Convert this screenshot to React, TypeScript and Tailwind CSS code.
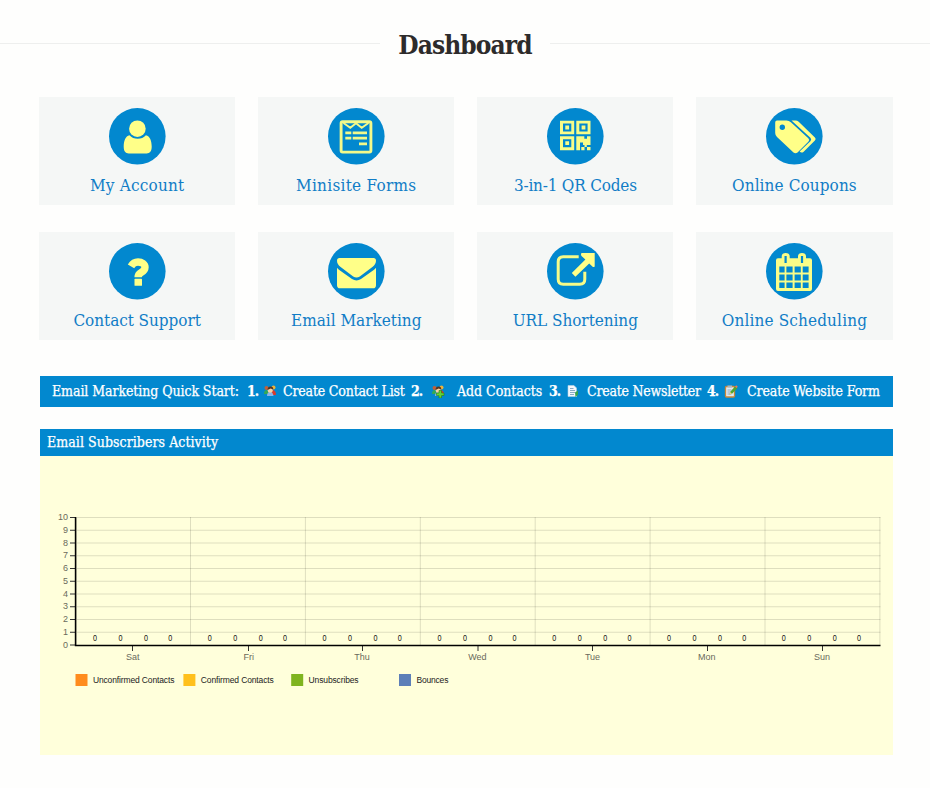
import React from "react";

const slab = "font-['Roboto_Slab','DejaVu_Serif_Condensed','DejaVu_Serif',serif] [font-stretch:condensed]";

const UserIcon = () => (
  <g fill="#ffff88">
    <circle cx="28.4" cy="20.7" r="8.3" />
    <path d="M20.5 27.2c-4 .8-5.800 5.500-5.800 11.300 0 5 2 6.900 5 6.900h18c3 0 5-1.900 5-6.900 0-5.800-1.800-10.500-5.800-11.300-2 2.300-5 3.600-8.200 3.600s-6.200-1.300-8.200-3.600z" />
  </g>
);

const FormIcon = () => (
  <g fill="none" stroke="#f3f98a">
    <rect x="13.1" y="13.7" width="29.8" height="30.4" rx="1.5" strokeWidth="2.9" />
    <path d="M15.500 15l6.800 4.800 5.700-4.500 5.700 4.500 6.800-4.800" strokeWidth="1.9" />
    <path d="M17.300 24.800h6M24.700 24.800h14.300M17.300 30.200h6M24.700 30.200h14.300M31 35.800h8" strokeWidth="2.8" />
  </g>
);

const QrIcon = () => (
  <g fill="#f8fc88">
    <path
      fillRule="evenodd"
      d="M13 12.700h14.200v13.600h-14.200zM16 15.600v7.900h8.300v-7.900zM29.300 12.700h14.200v13.600h-14.200zM32.300 15.600v7.900h8.300v-7.900zM13 28.300h14.200v14h-14.200zM16 31.300v8h8.300v-8z"
    />
    <path d="M18.300 17.600h3.800v3.800h-3.800zM34.600 17.600h3.800v3.800h-3.800zM18.300 33.300h3.800v3.800h-3.800z" />
    <path d="M29.300 28.300h8v2.500h2.700v-2.500h3.500v8.700h-7.500v-2.500h-3v7.800h-3.700zM34.300 39h3.200v3.300h-3.200zM37.500 37h2.300v2h-2.300zM40 39h3.500v3.300h-3.500z" />
  </g>
);

const TagsIcon = () => (
  <g fill="#ffff88">
    <path
      fillRule="evenodd"
      d="M11 12.500h9.500q2.500 0 4.400 1.700l17.400 16q1.800 1.700.2 3.400l-11 10.800q-2 1.500-4 0l-16.500-15.400q-1.800-1.700-1.800-4v-10.500q0-2 1.800-2zM16.300 16.600a2.700 2.700 0 1 0 0 5.400a2.700 2.700 0 1 0 0-5.400z"
    />
    <path d="M25.500 12.500h4q1.800 0 3.200 1.300l16.200 15.600q1.600 1.600 0 3.200l-11.500 11.300q-1.800 1.300-3.800-.3l10.800-10.400q1.600-1.600 0-3.400z" />
  </g>
);

const QuestionIcon = () => (
  <g>
    <path d="M22 23.300c1.600-2.700 4-4.300 7-4.300 4 0 7 2 7 5.200 0 2.800-1.900 4.200-4 5.500-2 1.200-2.900 2.300-2.900 4.600" fill="none" stroke="#ffff88" strokeWidth="7.4" />
    <rect x="25.5" y="35.8" width="7.5" height="7" rx=".6" fill="#ffff88" />
  </g>
);

const MailIcon = () => (
  <g fill="#ffff88">
    <path d="M11.500 15h34q2.500 0 2.500 2.800c0 2.500-1.300 4.400-3.300 5.900l-12.900 9.700q-3.300 2.200-6.600 0l-12.900-9.700c-2-1.500-3.300-3.400-3.300-5.900q0-2.800 2.500-2.800z" />
    <path d="M9 24.700q1 1.200 2.300 2.200l12.700 9.200q4.500 2.700 9 0l12.700-9.200q1.300-1 2.300-2.200v17.500q0 3.100-3 3.100h-33q-3 0-3-3.100z" />
  </g>
);

const LinkIcon = () => (
  <g>
    <path d="M31.700 13.800h-15.500q-5 0-5 5v17.400q0 5 5 5h16.600q5 0 5-5v-7.500" fill="none" stroke="#f7fb88" strokeWidth="3" />
    <path d="M34.500 10.100h13.200v13.500q-1.300 1-2.300 0l-3.200-3.200-13.800 13.300-3.600-3.600 13.600-13.500-3.900-3.600q-1-1.500 0-2.900z" fill="#ffff88" />
  </g>
);

const CalendarIcon = () => (
  <g>
    <path d="M12 15.300h3.700v-1.800q0-3.500 4-3.500t4 3.500v1.800h8.300v-1.800q0-3.500 4-3.500t4 3.500v1.800h4q2 0 2 2v28.700q0 2-2 2h-32q-2 0-2-2v-28.700q0-2 2-2z" fill="#f9fd88" />
    <path d="M18.500 13h2.200v7h-2.200zM34.900 13h2.200v7h-2.200zM13.300 23.600h5.300v6h-5.300zM20.400 23.600h6.200v6h-6.200zM28.600 23.600h6.200v6h-6.200zM36.700 23.600h5.900v6h-5.900zM13.300 31.400h5.300v6.200h-5.300zM20.400 31.400h6.200v6.200h-6.200zM28.600 31.400h6.200v6.200h-6.200zM36.700 31.400h5.900v6.200h-5.900zM13.300 39.400h5.300v5.600h-5.300zM20.400 39.400h6.200v5.600h-6.200zM28.600 39.400h6.200v5.600h-6.200zM36.700 39.400h5.900v5.600h-5.900z" fill="#0288cf" />
  </g>
);

const tiles = [
  { label: "My Account", Icon: UserIcon, track: "tracking-[0.2px]" },
  { label: "Minisite Forms", Icon: FormIcon, track: "tracking-[0.27px]" },
  { label: "3-in-1 QR Codes", Icon: QrIcon, track: "tracking-[-0.2px]" },
  { label: "Online Coupons", Icon: TagsIcon, track: "tracking-[0.1px]" },
  { label: "Contact Support", Icon: QuestionIcon, track: "tracking-[-0.05px]" },
  { label: "Email Marketing", Icon: MailIcon, track: "tracking-[0px]" },
  { label: "URL Shortening", Icon: LinkIcon, track: "tracking-[-0.05px]" },
  { label: "Online Scheduling", Icon: CalendarIcon, track: "tracking-[0.14px]" },
];

const People = ({ add = false }: { add?: boolean }) => (
  <svg width="14" height="14" viewBox="0 0 14 14">
    <circle cx="3.500" cy="4" r="2" fill="#c0603a" />
    <circle cx="10.500" cy="3.500" r="2" fill="#e9b23c" />
    <path d="M1 10q0-4 3-4l2 4z" fill="#35a852" />
    <path d="M9 6q4 0 4 5h-4z" fill="#d93a2b" />
    <path d="M4 12q0-4 3-4t3.500 4z" fill="#8bb5e8" />
    <circle cx="7.200" cy="6.300" r="2.500" fill="#f7d3a3" />
    <path d="M4.500 6q0-3.500 3-3.500t2.700 3l-2.500-1z" fill="#57331d" />
    {add && <path d="M8 6.500h2.500v2.500h2.500v2.500h-2.500v2.500h-2.500v-2.500h-2.500v-2.500h2.500z" fill="#62d236" stroke="#287b16" strokeWidth=".6" />}
  </svg>
);

const Newsletter = () => (
  <svg width="12" height="14" viewBox="0 0 12 14">
    <path d="M1 1.500h6l2.500 2.500v8.500h-8.500z" fill="#f3f8fc" stroke="#b8d0e2" strokeWidth=".6" />
    <path d="M3 4.500h3.500M3 6.500h5M3 8.500h5M3 10.500h4" stroke="#6e95b5" strokeWidth=".8" />
    <path d="M8 8.500l3-2v4l-2.500 2.500z" fill="#37a34a" />
  </svg>
);

const FormPencil = () => (
  <svg width="14" height="14" viewBox="0 0 14 14">
    <rect x="1.5" y="2.5" width="9" height="10.5" rx="1" fill="#dfe9f1" stroke="#ca8738" strokeWidth="1.3" />
    <path d="M3.500 1.500h4.500v2h-4.500z" fill="#a8b7c2" />
    <path d="M3.500 6h4M3.500 8h3M3.500 10h4" stroke="#7e9bb5" strokeWidth=".8" />
    <path d="M5.500 10.500l1-3 5-5.500 2 2-5.200 5.600z" fill="#50a52f" />
    <path d="M11 2.500l1.200-1.300 1.600 1.600-1.300 1.300z" fill="#ed765b" />
    <path d="M5.500 10.500l.8-2.500 1.700 1.700z" fill="#f2cf75" />
  </svg>
);

const days = [
  { name: "Sat", x: 132.7, tick: 132.5 },
  { name: "Fri", x: 248.7, tick: 248.5 },
  { name: "Thu", x: 362, tick: 362.5 },
  { name: "Wed", x: 477.3, tick: 478 },
  { name: "Tue", x: 592.5, tick: 592.5 },
  { name: "Mon", x: 706.7, tick: 707.5 },
  { name: "Sun", x: 822, tick: 822.5 },
];

const legend = [
  { name: "Unconfirmed Contacts", x: 75.5, w: 81.5, color: "#ff8c1e" },
  { name: "Confirmed Contacts", x: 183.4, w: 73, color: "#ffc01c" },
  { name: "Unsubscribes", x: 291.2, w: 50, color: "#7fb41f" },
  { name: "Bounces", x: 399, w: 32, color: "#5d7fb8" },
];

const Chart = () => (
  <svg className="block font-['Liberation_Sans',sans-serif]" width="853" height="299" viewBox="40 456 853 299">
    {Array.from({ length: 11 }, (_, i) => {
      const y = 645 - i * 12.75;
      return (
        <g key={i}>
          {i > 0 && <path d={`M77 ${y}H880.500`} stroke="#000" strokeOpacity=".13" />}
          <path d={`M70 ${y}H76`} stroke="#333" />
          <text x="68" y={y + 2.6} textAnchor="end" fontSize="9" fill="#6a6a5c">{i}</text>
        </g>
      );
    })}
    {days.map((d, i) => {
      const right = 190.5 + i * 114.9;
      return (
        <g key={d.name}>
          <path d={`M${right} 517V645`} stroke="#000" strokeOpacity=".13" />
          <path d={`M${d.tick} 645v6`} stroke="#333" />
          <text x={d.x} y="660" textAnchor="middle" fontSize="9" fill="#6a6a5c">{d.name}</text>
          {[95, 120.5, 146, 170.2].map((x) => (
            <text key={x} x={x + i * 114.8} y="641.3" textAnchor="middle" fontSize="8.5" textLength="4" lengthAdjust="spacingAndGlyphs" fill="#111">0</text>
          ))}
        </g>
      );
    })}
    <path d="M75.600 517V645.500H880.500" fill="none" stroke="#000" strokeWidth="1.6" />
    {legend.map((l) => (
      <g key={l.name}>
        <rect x={l.x} y="674" width="12" height="12" fill={l.color} />
        <text x={l.x + 17.4} y="683.3" fontSize="8.5" fill="#222" textLength={l.w}>{l.name}</text>
      </g>
    ))}
  </svg>
);

export default function App() {
  return (
    <div className="h-[788px] w-[930px] overflow-hidden bg-[#fefefd]">
      <header className="flex h-[96.5px] items-start">
        <div className="mt-[43px] h-px w-[380px] bg-[#eeefee]" />
        <h1 className={`${slab} mt-[28px] w-[170px] text-center text-[26px] leading-[34px] font-bold whitespace-nowrap tracking-[-0.9px] text-[#2d2b2b]`}>Dashboard</h1>
        <div className="mt-[43px] h-px flex-1 bg-[#eeefee]" />
      </header>
      <main>
        <div className="ml-[39px] grid w-[853.6px] grid-cols-4 gap-x-[22.8px] gap-y-[26.5px]">
          {tiles.map(({ label, Icon, track }) => (
            <a key={label} className="flex h-[108.5px] flex-col items-center bg-[#f5f7f6] pt-[11px]">
              <svg className="shrink-0" width="57" height="57" viewBox="0 0 57 57">
                <circle cx="28.3" cy="28.3" r="28.3" fill="#0288cf" />
                <Icon />
              </svg>
              <span className={`${slab} mt-[8px] text-[17px] leading-[24px] whitespace-nowrap text-[#117dc6] ${track}`}>{label}</span>
            </a>
          ))}
        </div>
        <nav className={`${slab} mt-[36px] ml-[40px] flex h-[30.5px] w-[853px] items-center bg-[#0288cf] pl-[12px] text-[14px] whitespace-nowrap text-white [-webkit-text-stroke:0.25px_white]`}>
          <span className="w-[195px] tracking-[-0.08px]">Email Marketing Quick Start:</span>
          <b className="w-[16px] tracking-[-1px]">1.</b>
          <span className="w-[20px]"><People /></span>
          <span className="w-[128px] tracking-[-0.18px]">Create Contact List</span>
          <b className="w-[20px] tracking-[-1px]">2.</b>
          <span className="w-[26px]"><People add /></span>
          <span className="w-[92px] tracking-[-0.04px]">Add Contacts</span>
          <b className="w-[18px] tracking-[-1px]">3.</b>
          <span className="w-[20px]"><Newsletter /></span>
          <span className="w-[120px] tracking-[-0.24px]">Create Newsletter</span>
          <b className="w-[17px] tracking-[-1px]">4.</b>
          <span className="w-[23px]"><FormPencil /></span>
          <span className="tracking-[-0.11px]">Create Website Form</span>
        </nav>
        <section className="mt-[22.5px] ml-[40px] w-[853px] bg-[#ffffdb]">
          <h2 className={`${slab} flex h-[26.5px] items-center bg-[#0288cf] pl-[7px] text-[14px] whitespace-nowrap text-white tracking-[0.06px] [-webkit-text-stroke:0.25px_white]`}>Email Subscribers Activity</h2>
          <Chart />
        </section>
      </main>
    </div>
  );
}
